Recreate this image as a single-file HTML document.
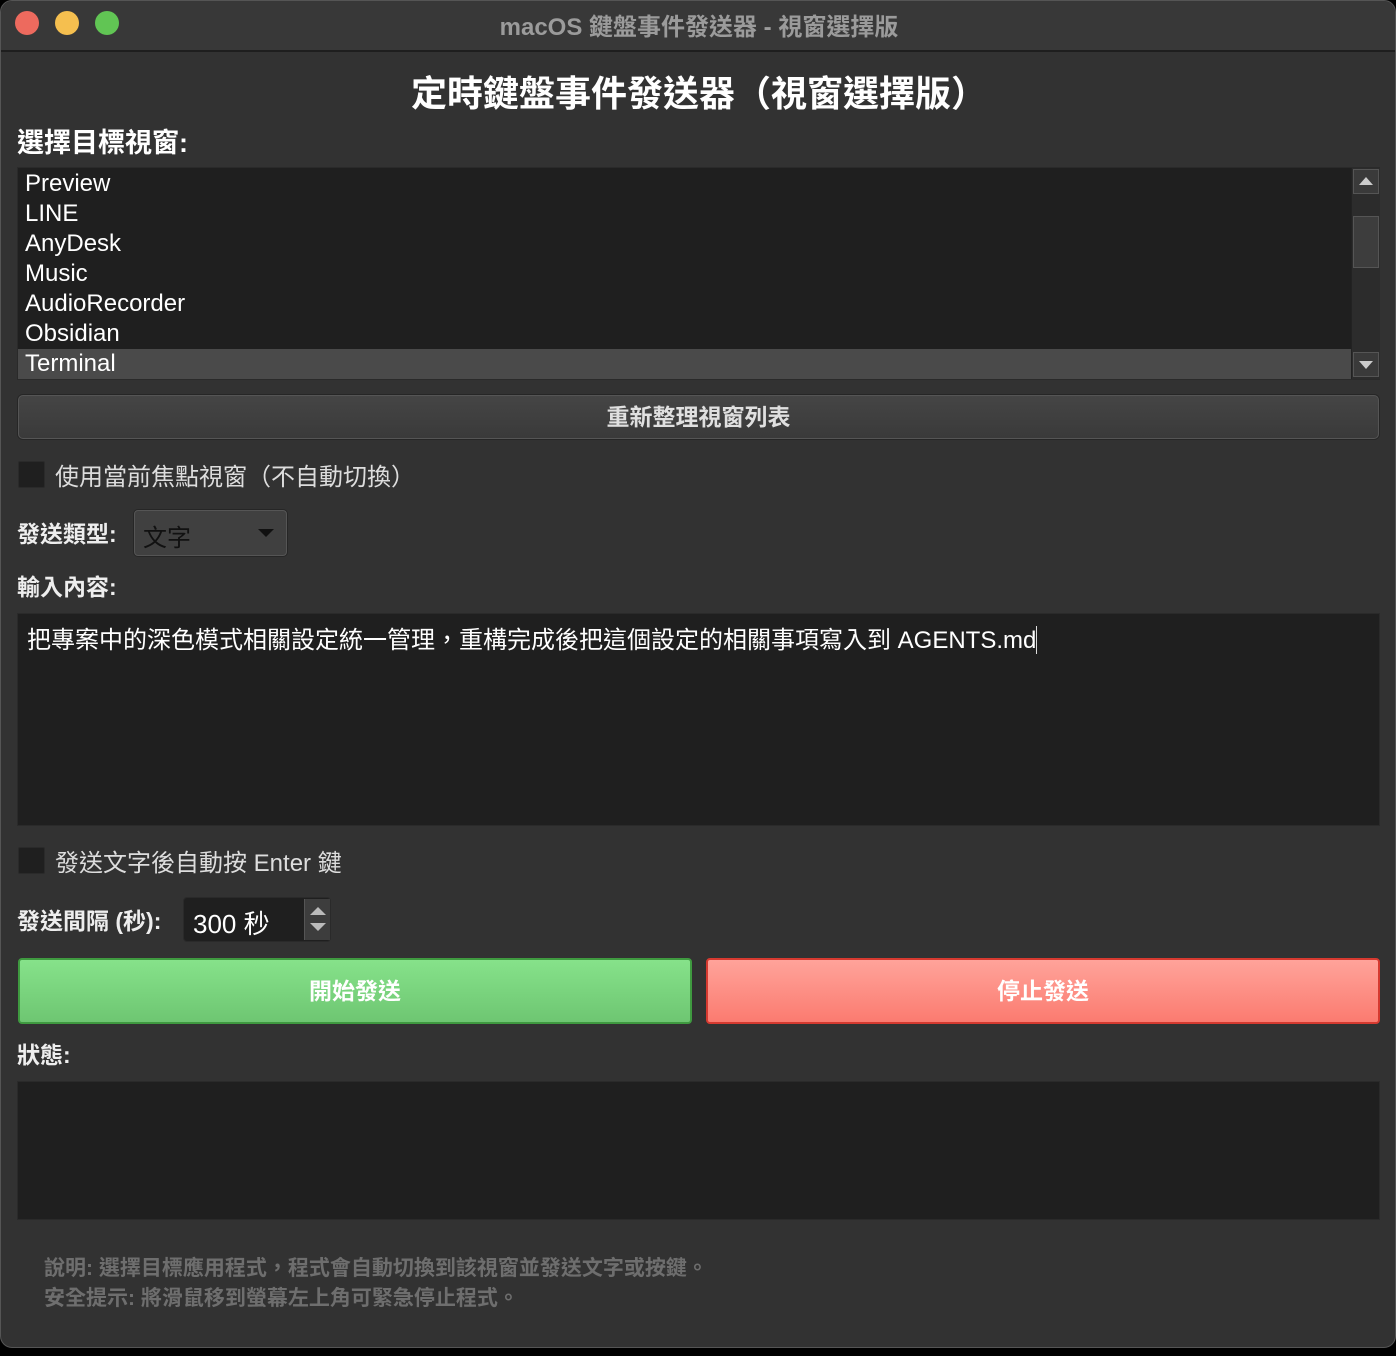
<!DOCTYPE html>
<html><head><meta charset="utf-8"><style>
*{margin:0;padding:0;box-sizing:border-box}
body{width:1396px;height:1356px;background:#000;font-family:"Liberation Sans","Noto Sans CJK TC",sans-serif;color:#fff;position:relative;overflow:hidden}
.win{position:absolute;left:0;top:0;width:1396px;height:1348px;background:#323232;border-radius:12px;overflow:hidden;border:1px solid #555}
.tb{position:absolute;left:0;top:0;width:100%;height:51px;background:#383838;border-bottom:2px solid #1e1e1e}
.dot{position:absolute;top:10px;width:24px;height:24px;border-radius:50%}
.a{position:absolute;white-space:nowrap}
.box{position:absolute;background:#1f1f1f;border:1px solid #2a2a2a}
.cb{position:absolute;width:27px;height:27px;background:#1f1f1f;border:1px solid #2a2a2a;border-radius:2px}
.lb{font-weight:bold}
</style></head><body>
<div class="win">
<div class="tb">
<div class="dot" style="left:14px;background:#ed6a5e"></div>
<div class="dot" style="left:54px;background:#f5bf4f"></div>
<div class="dot" style="left:94px;background:#61c554"></div>
<div class="a" style="left:0;width:1396px;text-align:center;top:6px;font-size:24px;font-weight:bold;color:#9b9b9b">macOS 鍵盤事件發送器 - 視窗選擇版</div>
</div>
<div class="a" style="left:0;width:1396px;text-align:center;top:64px;font-size:36px;font-weight:bold">定時鍵盤事件發送器（視窗選擇版）</div>
<div class="a" style="left:16px;top:120px;font-size:27px;font-weight:bold">選擇目標視窗:</div>

<div class="box" style="left:16px;top:166px;width:1363px;height:213px;font-size:24px;line-height:30px">
<div style="padding-left:7px;padding-top:1px">Preview<br>LINE<br>AnyDesk<br>Music<br>AudioRecorder<br>Obsidian</div>
<div style="position:absolute;left:0;top:181px;width:1333px;height:30px;background:#4a4a4a;padding-left:7px">Terminal</div>
<div style="position:absolute;left:1333px;top:0;width:29px;height:211px;background:#2c2c2c;border-left:1px solid #222">
<div style="position:absolute;left:1px;top:1px;width:26px;height:25px;background:#3a3a3a;border:1px solid #555"><div style="position:absolute;left:5px;top:7px;border-left:7px solid transparent;border-right:7px solid transparent;border-bottom:8px solid #ccc"></div></div>
<div style="position:absolute;left:1px;top:48px;width:26px;height:52px;background:#3d3d3d;border:1px solid #555"></div>
<div style="position:absolute;left:1px;top:184px;width:26px;height:25px;background:#3a3a3a;border:1px solid #555"><div style="position:absolute;left:5px;top:8px;border-left:7px solid transparent;border-right:7px solid transparent;border-top:8px solid #ccc"></div></div>
</div>
</div>

<div class="a" style="left:17px;top:394px;width:1361px;height:44px;background:linear-gradient(#454545,#3a3a3a);border:1px solid #555;border-radius:5px;box-shadow:0 0 0 1px #262626;text-align:center;line-height:42px;font-size:23px;font-weight:bold;color:#e0e0e0">重新整理視窗列表</div>

<div class="cb" style="left:17px;top:460px"></div>
<div class="a" style="left:54px;top:456px;font-size:24px;color:#ddd">使用當前焦點視窗（不自動切換）</div>

<div class="a lb" style="left:16px;top:514px;font-size:23px;color:#eee">發送類型:</div>
<div class="a" style="left:133px;top:509px;width:153px;height:46px;background:#404040;border:1px solid #555;border-radius:4px;box-shadow:0 0 0 1px #262626">
<div class="a" style="left:8px;top:7px;font-size:24px;color:#111">文字</div>
<div class="a" style="left:123px;top:18px;border-left:8px solid transparent;border-right:8px solid transparent;border-top:8px solid #111"></div>
</div>

<div class="a lb" style="left:16px;top:567px;font-size:23px;color:#eee">輸入內容:</div>
<div class="box" style="left:16px;top:612px;width:1363px;height:213px">
<div class="a" style="left:9px;top:6px;font-size:24px">把專案中的深色模式相關設定統一管理，重構完成後把這個設定的相關事項寫入到 AGENTS.md<span style="display:inline-block;width:1px;height:28px;background:#ddd;vertical-align:-6px"></span></div>
</div>

<div class="cb" style="left:17px;top:846px"></div>
<div class="a" style="left:54px;top:842px;font-size:24px;color:#ddd">發送文字後自動按 Enter 鍵</div>

<div class="a lb" style="left:16px;top:901px;font-size:23px;color:#eee">發送間隔 (秒):</div>
<div class="a" style="left:182px;top:896px;width:148px;height:45px;background:#1f1f1f;border:1px solid #2a2a2a;border-radius:4px">
<div class="a" style="left:9px;top:6px;font-size:26px">300 秒</div>
<div class="a" style="left:120px;top:1px;width:26px;height:41px;background:#3d3d3d;border-left:1px solid #555">
<div class="a" style="left:5px;top:8px;border-left:8px solid transparent;border-right:8px solid transparent;border-bottom:8px solid #bbb"></div>
<div class="a" style="left:5px;top:24px;border-left:8px solid transparent;border-right:8px solid transparent;border-top:8px solid #bbb"></div>
</div></div>

<div class="a" style="left:17px;top:957px;width:674px;height:66px;background:linear-gradient(#86e28a,#6ec672);border:2px solid #3f9a40;border-radius:4px;text-align:center;line-height:62px;font-size:23px;font-weight:bold">開始發送</div>
<div class="a" style="left:705px;top:957px;width:674px;height:66px;background:linear-gradient(#ffa39a,#fb7b70);border:2px solid #d63a30;border-radius:4px;text-align:center;line-height:62px;font-size:23px;font-weight:bold">停止發送</div>

<div class="a" style="left:16px;top:1035px;font-size:23px;font-weight:bold;color:#eee">狀態:</div>
<div class="box" style="left:16px;top:1080px;width:1363px;height:139px"></div>

<div class="a" style="left:43px;top:1253px;font-size:21px;font-weight:bold;color:#6e6e6e;line-height:30px">說明: 選擇目標應用程式，程式會自動切換到該視窗並發送文字或按鍵。<br>安全提示: 將滑鼠移到螢幕左上角可緊急停止程式。</div>
</div>
</body></html>
